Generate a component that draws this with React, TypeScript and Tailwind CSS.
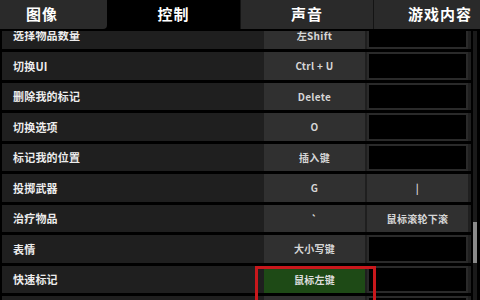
// Key binding settings screen (controls tab)

type Binding = {
  label: string;
  primary: string;
  secondary?: string;
  highlight?: boolean;
};

const tabs = [
  { name: '图像', active: false },
  { name: '控制', active: true },
  { name: '声音', active: false },
  { name: '游戏内容', active: false },
];

const bindings: Binding[] = [
  { label: '选择物品数量', primary: '左Shift' },
  { label: '切换UI', primary: 'Ctrl + U' },
  { label: '删除我的标记', primary: 'Delete' },
  { label: '切换选项', primary: 'O' },
  { label: '标记我的位置', primary: '插入键' },
  { label: '投掷武器', primary: 'G', secondary: '|' },
  { label: '治疗物品', primary: '`', secondary: '鼠标滚轮下滚' },
  { label: '表情', primary: '大小写键' },
  { label: '快速标记', primary: '鼠标左键', highlight: true },
  { label: '地图', primary: 'M' },
];

function KeyRow({ item }: { item: Binding }) {
  return (
    <div className="flex h-[27.5px] shrink-0 items-stretch bg-[#1f1f1f] ml-[2px] w-[469px]">
      <div className="flex flex-1 items-center pl-[11px] text-[11px] font-bold tracking-[0.2px] text-[#ececec]">
        {item.label}
      </div>
      <div className="relative w-[101px]">
        <div
          className={
            item.highlight
              ? 'flex h-full items-center justify-center bg-[#1e4a16] text-[10px] font-semibold tracking-[0.3px] text-[#dcdcdc]'
              : 'flex h-full items-center justify-center bg-[#303030] text-[10px] font-semibold tracking-[0.3px] text-[#d6d6d6]'
          }
        >
          {item.primary}
        </div>
        {item.highlight && (
          <div className="pointer-events-none absolute left-[-9px] right-[-11px] top-0 h-[40px] border-[3px] border-[#c8181c]" />
        )}
      </div>
      <div className="w-[2px]" />
      <div
        className={
          item.secondary
            ? 'flex w-[101px] items-center justify-center bg-[#303030] text-[10px] font-semibold tracking-[0.3px] text-[#d6d6d6]'
            : 'w-[101px] border-2 border-[#2a2a2a] bg-black'
        }
      >
        {item.secondary}
      </div>
      <div className="w-[3px]" />
    </div>
  );
}

export default function App() {
  return (
    <div
      className="relative h-[300px] w-[480px] overflow-hidden bg-black"
      style={{ fontFamily: '"Noto Sans CJK SC", Roboto, "Liberation Sans", sans-serif' }}
    >
      {/* Tabs */}
      <div className="ml-[-23px] flex h-[29px] w-[532px]">
        {tabs.map((tab, i) => (
          <div
            key={tab.name}
            className={
              tab.active
                ? 'flex w-[133px] items-center justify-center bg-black text-[15px] font-bold tracking-[1px] text-white'
                : i === 0
                  ? 'flex w-[130px] items-center justify-center rounded-br-[4px] bg-[#2a2a2a] text-[15px] font-bold tracking-[1px] text-white'
                  : 'flex w-[133px] items-center justify-center border-l border-[#141414] bg-[#2a2a2a] text-[15px] font-bold tracking-[1px] text-white'
            }
          >
            {tab.name}
          </div>
        ))}
      </div>

      {/* Scrollable list */}
      <div className="relative mt-[2px] h-[269px] overflow-hidden">
        <div className="mt-[-9.5px] flex flex-col gap-[3px]">
          {bindings.map((b) => (
            <KeyRow key={b.label} item={b} />
          ))}
        </div>
        {/* Scrollbar */}
        <div className="absolute right-[3px] top-0 h-full w-[4px] bg-[#1a1a1a]">
          <div className="mt-[191px] h-[41px] w-full bg-[#8a8a8a]" />
        </div>
      </div>
    </div>
  );
}
